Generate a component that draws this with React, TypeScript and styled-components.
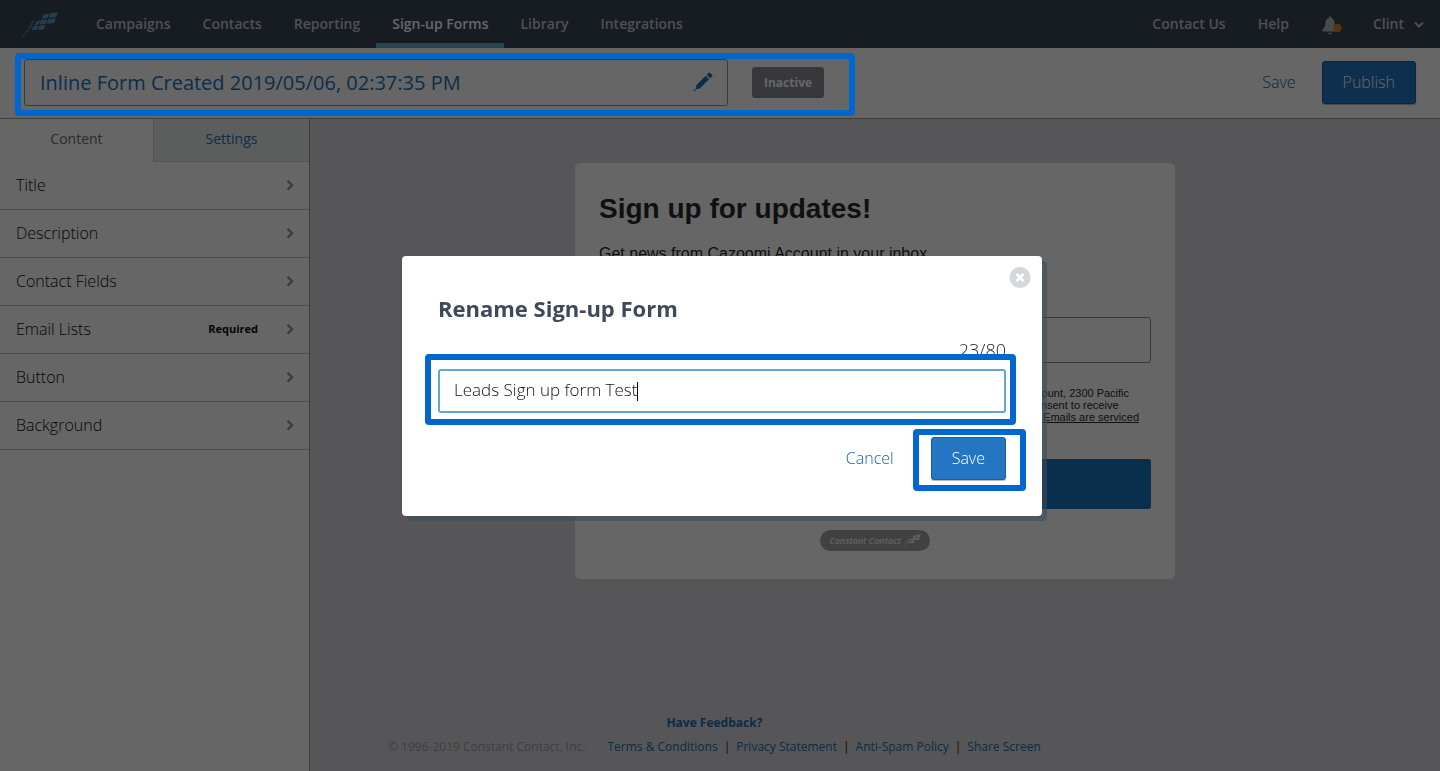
import React, { useState } from "react";
import styled, { createGlobalStyle } from "styled-components";

const SANS = `"Open Sans", "Noto Sans", sans-serif`;
const ARIAL = `"Liberation Sans", Arial, sans-serif`;
const LIGHT = 300;

const Global = createGlobalStyle`
  *, *::before, *::after { box-sizing: border-box; }
  html, body, #root { height: 100%; }
  body { margin: 0; font-family: ${SANS}; background: #d6d8dc; color: #1e2229; }
  button, input { font: inherit; }
  a { text-decoration: none; }
`;

const Page = styled.div`
  display: flex;
  flex-direction: column;
  min-height: 100%;
`;

/* ---------- top navigation ---------- */
const TopBar = styled.header`
  display: flex;
  align-items: stretch;
  justify-content: space-between;
  height: 48px;
  background: #3a4657;
`;

const NavGroup = styled.nav`
  display: flex;
  align-items: stretch;
`;

const LogoLink = styled.a`
  display: flex;
  align-items: center;
  width: 80px;
  padding-left: 22px;
  color: #5a9ebc;
`;

const NavLink = styled.a<{ $active?: boolean }>`
  display: flex;
  align-items: center;
  gap: 10px;
  padding: 5px 16px 0;
  border-bottom: 5px solid ${(p) => (p.$active ? "#62aac8" : "transparent")};
  color: ${(p) => (p.$active ? "#ffffff" : "#c4c8cc")};
  font-size: 14px;
  font-weight: 600;
  line-height: 18px;
`;

const BellButton = styled.button`
  position: relative;
  display: flex;
  align-items: center;
  margin: 0 15px 0 17px;
  padding: 2px 0 0;
  border: 0;
  background: none;
  color: #b4b8bc;
`;

/* ---------- form title toolbar ---------- */
const Toolbar = styled.div`
  display: flex;
  align-items: center;
  justify-content: space-between;
  height: 71px;
  padding: 0 24px 1px;
  border-bottom: 1px solid #9aa0a8;
  background: #ffffff;
`;

const TitleGroup = styled.div`
  position: relative;
  display: flex;
  align-items: center;
  gap: 24px;
`;

const TitleButton = styled.button`
  display: flex;
  align-items: center;
  justify-content: space-between;
  width: 704px;
  height: 47px;
  padding: 0 14px 1px 15px;
  border: 1px solid #8d929a;
  border-radius: 3px;
  background: #ffffff;
  color: #1a73b8;
  font-size: 20px;
  font-weight: 400;
  text-align: left;
`;

const StatusBadge = styled.span`
  padding: 7px 12px 6px;
  border-radius: 3px;
  background: #888d96;
  color: #ffffff;
  font-size: 12px;
  font-weight: 700;
  line-height: 18px;
`;

const Actions = styled.div`
  display: flex;
  align-items: center;
  justify-content: flex-end;
  gap: 26px;
`;

const TextButton = styled.button`
  padding: 0 0 2px;
  border: 0;
  background: none;
  color: #0f66b4;
  font-size: 16px;
  font-weight: ${LIGHT};
  line-height: 20px;
`;

const PrimaryButton = styled.button`
  height: 43px;
  padding: 0 20px 2px;
  border: 1px solid #1a5fa0;
  border-radius: 3px;
  background: #2476c2;
  box-shadow: 0 1px 1px rgba(0, 0, 0, 0.3);
  color: #ffffff;
  font-size: 16px;
  font-weight: ${LIGHT};
  line-height: 20px;
`;

/* ---------- sidebar ---------- */
const Body = styled.div`
  display: flex;
  flex: 1;
`;

const Sidebar = styled.aside`
  flex: none;
  width: 310px;
  border-right: 1px solid #9a9ea6;
  background: #ffffff;
`;

const Tabs = styled.div`
  display: grid;
  grid-template-columns: 153px 1fr;
  height: 43px;
`;

const Tab = styled.button<{ $active?: boolean }>`
  padding: 0 0 3px;
  border: 0;
  border-left: ${(p) => (p.$active ? "0" : "1px solid #cdd1d4")};
  border-bottom: 1px solid ${(p) => (p.$active ? "transparent" : "#cdd1d4")};
  background: ${(p) => (p.$active ? "#ffffff" : "#e6eaea")};
  color: ${(p) => (p.$active ? "#6c7077" : "#1a73b8")};
  font-size: 14px;
`;

const Sections = styled.ul`
  margin: 0;
  padding: 0;
  list-style: none;
`;

const SectionButton = styled.button`
  display: flex;
  align-items: center;
  width: 100%;
  height: 48px;
  padding: 0 15px 2px 16px;
  border: 0;
  border-bottom: 1px solid #c4c7ca;
  background: none;
  color: #0a0d12;
  font-size: 16px;
  font-weight: ${LIGHT};
  text-align: left;
`;

const SectionName = styled.span`
  flex: 1;
`;

const Required = styled.span`
  margin-right: 28px;
  font-size: 11px;
  font-weight: 700;
`;

/* ---------- preview ---------- */
const Main = styled.main`
  display: flex;
  flex: 1;
  flex-direction: column;
  align-items: center;
  padding: 44px 0 16px;
  background: #d6d8dc;
`;

const Card = styled.form`
  display: flex;
  flex-direction: column;
  width: 600px;
  max-width: 100%;
  padding: 29px 24px 28px;
  border-radius: 5px;
  background: #ffffff;
  color: #2a2a2a;
  font-family: ${ARIAL};
`;

const CardTitle = styled.h1`
  margin: 0 0 18px;
  font-size: 28px;
  font-weight: 700;
  line-height: 34px;
`;

const CardText = styled.p`
  margin: 0;
  font-size: 16px;
  line-height: 20px;
`;

const EmailInput = styled.input`
  height: 46px;
  margin: 53px 0 24px;
  border: 1px solid #8a8a8a;
  border-radius: 3px;
  background: #ffffff;
`;

const FinePrint = styled.p`
  margin: 0 0 24px;
  font-size: 11px;
  line-height: 12px;

  a { color: inherit; text-decoration: underline; }
`;

const SubmitButton = styled.button`
  height: 50px;
  margin-bottom: 21px;
  border: 0;
  border-radius: 3px;
  background: #1b77bd;
  color: #ffffff;
  font-size: 16px;
`;

const PoweredBy = styled.a`
  display: flex;
  align-items: center;
  align-self: center;
  gap: 2px;
  height: 21px;
  padding: 0 9px;
  border-radius: 11px;
  background: #a3a3a3;
  color: #f2f2f2;
  font-family: ${SANS};
  font-size: 9px;
  font-style: italic;
  font-weight: 600;
`;

const Footer = styled.footer`
  display: flex;
  flex-direction: column;
  align-items: center;
  align-self: flex-start;
  gap: 8px;
  margin: auto 0 0 78px;
  font-size: 12px;
  line-height: 16px;
`;

const FooterRow = styled.div`
  display: flex;
  gap: 6px;
`;

const Copyright = styled.span`
  margin-right: 16px;
  color: #9a9da3;
`;

const FooterLink = styled.a<{ $strong?: boolean }>`
  color: #1a6fb0;
  font-weight: ${(p) => (p.$strong ? 700 : 400)};
`;

/* ---------- rename dialog ---------- */
const Overlay = styled.div`
  position: fixed;
  inset: 0;
  z-index: 10;
  display: flex;
  align-items: flex-start;
  justify-content: center;
  padding: 256px 0 0 4px;
  background: rgba(0, 0, 0, 0.6);
`;

const Dialog = styled.section`
  position: relative;
  width: 640px;
  padding: 36px;
  border-radius: 4px;
  background: #ffffff;
  box-shadow: 5px 5px 0 rgba(60, 76, 92, 0.6);
`;

const CloseButton = styled.button`
  position: absolute;
  top: 11px;
  right: 11px;
  display: flex;
  padding: 0;
  border: 0;
  background: none;
`;

const DialogTitle = styled.h2`
  margin: 0 0 20px;
  color: #3c4a5a;
  font-size: 22px;
  font-weight: 700;
  line-height: 32px;
`;

const CounterRow = styled.div`
  display: flex;
  justify-content: flex-end;
  margin-bottom: 13px;
  color: #20262f;
  font-size: 18px;
  font-weight: ${LIGHT};
  line-height: 12px;
`;

const Field = styled.div`
  position: relative;
  margin-bottom: 24px;
`;

const InputBox = styled.label`
  display: flex;
  align-items: center;
  height: 44px;
  padding: 0 14px;
  border: 2px solid #5fa8cf;
  border-radius: 3px;
`;

const NameInput = styled.input`
  field-sizing: content;
  padding: 0 0 3px;
  border: 0;
  outline: 0;
  background: none;
  color: #10151c;
  font-size: 17px;
  font-weight: ${LIGHT};
  line-height: 22px;
`;

const Caret = styled.span`
  width: 1px;
  height: 19px;
  background: #000000;
`;

const SaveWrap = styled.div`
  position: relative;
  display: flex;
  margin-left: 11px;
`;

const Highlight = styled.span<{ $inset: string }>`
  position: absolute;
  inset: ${(p) => p.$inset};
  z-index: 20;
  border: 6px solid #0167cf;
  border-radius: 4px;
  pointer-events: none;
`;

/* ---------- icons ---------- */
const FlagLogo = ({ width, height }: { width: number; height: number }) => (
  <svg width={width} height={height} viewBox="0 0 36 25" fill="currentColor" aria-hidden="true">
    <path d="M21.500 2.600 27.200 1.400 25.600 6 19.400 6.800zM28.300 1.200 35.800 0.200 34.200 5 26.700 5.900zM19 7.900 25.200 7.200 23.600 12 17 12.400zM26.300 7 33.800 6.200 32.200 11 24.700 11.800z" />
    <path d="M14.800 9.600 18.200 8 16.400 12.400 12.200 13.200zM11.600 14.300 16.200 13.500 14.800 17.800 10 18.200zM17.300 13.500 23.400 13 21.800 17.600 15.800 17.800z" />
    <path d="M9.500 10.300 12.700 7.500 11.500 10 8.600 13zM7.700 14.200 10.900 11.500 9.500 14.600 5.900 17.200zM5.300 18.200 8.700 16 5.500 19.800 3.300 21.700zM2.800 21.400 4.600 20.700 0.800 25 0 24.700z" />
  </svg>
);

const Pencil = () => (
  <svg width="20" height="20" viewBox="0 0 20 20" fill="currentColor" aria-hidden="true">
    <path d="M13.700 2.700 15.700 0.700Q16.300 0.200 17 0.800L19.200 3Q19.800 3.600 19.200 4.200L17.200 6.200z" />
    <path d="M12.800 3.700 16.200 7.200 6.700 16.600 2.500 17.500 3.400 13z" />
    <path d="M1.200 17.100 2.800 18.700 0.600 19.400z" />
  </svg>
);

const Bell = () => (
  <svg width="20" height="19" viewBox="0 0 20 19" aria-hidden="true">
    <path
      fill="currentColor"
      d="M8 0.600a1.200 1.200 0 0 1 1.200 1.400C11.400 2.600 12.600 4.400 12.600 6.800c0 3.400 0.600 5.400 2.600 6.400v2.300H0.500v-2.300C2.600 12.200 3.400 10.200 3.400 6.800c0-2.400 1.200-4.200 3.400-4.800A1.200 1.200 0 0 1 8 0.600zM6 16.700h4a2 1.600 0 0 1-4 0z"
    />
    <circle cx="15.500" cy="12" r="4.200" fill="#d9822b" />
  </svg>
);

const ChevronDown = () => (
  <svg width="10" height="8" viewBox="0 0 10 8" fill="none" stroke="currentColor" strokeWidth="2" aria-hidden="true">
    <path d="M1 2.500 5 6.500 9 2.500" />
  </svg>
);

const ChevronRight = () => (
  <svg width="8" height="12" viewBox="0 0 8 12" fill="none" stroke="#8e9398" strokeWidth="2.200" aria-hidden="true">
    <path d="M1.500 1.700 6 6.200 1.500 10.700" />
  </svg>
);

const CloseIcon = () => (
  <svg width="22" height="22" viewBox="0 0 22 22" aria-hidden="true">
    <circle cx="11" cy="10.500" r="10.500" fill="#d5d8db" />
    <path d="M7.500 7 14.500 14M14.500 7 7.500 14" stroke="#fff" strokeWidth="2.600" />
  </svg>
);

const navItems = ["Campaigns", "Contacts", "Reporting", "Sign-up Forms", "Library", "Integrations"];
const sections = ["Title", "Description", "Contact Fields", "Email Lists", "Button", "Background"];
const footerLinks = ["Terms & Conditions", "Privacy Statement", "Anti-Spam Policy", "Share Screen"];

export default function App() {
  const [name, setName] = useState("Leads Sign up form Test");

  return (
    <>
      <Global />
      <Page>
        <TopBar>
          <NavGroup aria-label="Main">
            <LogoLink href="#" aria-label="Home">
              <FlagLogo width={36} height={25} />
            </LogoLink>
            {navItems.map((item) => (
              <NavLink key={item} href="#" $active={item === "Sign-up Forms"}>
                {item}
              </NavLink>
            ))}
          </NavGroup>
          <NavGroup aria-label="Account">
            <NavLink href="#">Contact Us</NavLink>
            <NavLink href="#">Help</NavLink>
            <BellButton type="button" aria-label="Notifications">
              <Bell />
            </BellButton>
            <NavLink href="#">
              Clint
              <ChevronDown />
            </NavLink>
          </NavGroup>
        </TopBar>

        <Toolbar>
          <TitleGroup>
            <TitleButton type="button">
              Inline Form Created 2019/05/06, 02:37:35 PM
              <Pencil />
            </TitleButton>
            <StatusBadge>Inactive</StatusBadge>
            <Highlight $inset="-6px -31px -10px -9px" />
          </TitleGroup>
          <Actions>
            <TextButton type="button">Save</TextButton>
            <PrimaryButton type="button">Publish</PrimaryButton>
          </Actions>
        </Toolbar>

        <Body>
          <Sidebar>
            <Tabs>
              <Tab type="button" $active>Content</Tab>
              <Tab type="button">Settings</Tab>
            </Tabs>
            <Sections>
              {sections.map((section) => (
                <li key={section}>
                  <SectionButton type="button">
                    <SectionName>{section}</SectionName>
                    {section === "Email Lists" && <Required>Required</Required>}
                    <ChevronRight />
                  </SectionButton>
                </li>
              ))}
            </Sections>
          </Sidebar>

          <Main>
            <Card>
              <CardTitle>Sign up for updates!</CardTitle>
              <CardText>Get news from Cazoomi Account in your inbox.</CardText>
              <EmailInput type="email" aria-label="Email" />
              <FinePrint>
                By submitting this form, you are consenting to receive marketing emails from: Cazoomi Account, 2300 Pacific
                Coast Highway, Suite 305, Hermosa Beach, California, 90254, US. You can revoke your consent to receive
                emails at any time by using the SafeUnsubscribe® link, found at the bottom of every email.{" "}
                <a href="#">Emails are serviced by Constant Contact.</a>
              </FinePrint>
              <SubmitButton type="button">Sign up!</SubmitButton>
              <PoweredBy href="#">
                Constant Contact
                <FlagLogo width={18} height={13} />
              </PoweredBy>
            </Card>

            <Footer>
              <FooterLink href="#" $strong>Have Feedback?</FooterLink>
              <FooterRow>
                <Copyright>© 1996-2019 Constant Contact, Inc.</Copyright>
                {footerLinks.map((link, i) => (
                  <React.Fragment key={link}>
                    {i > 0 && <span>|</span>}
                    <FooterLink href="#">{link}</FooterLink>
                  </React.Fragment>
                ))}
              </FooterRow>
            </Footer>
          </Main>
        </Body>
      </Page>

      <Overlay>
        <Dialog role="dialog" aria-labelledby="rename-title">
          <CloseButton type="button" aria-label="Close">
            <CloseIcon />
          </CloseButton>
          <DialogTitle id="rename-title">Rename Sign-up Form</DialogTitle>
          <CounterRow>{name.length}/80</CounterRow>
          <Field>
            <InputBox>
              <NameInput aria-label="Form name" value={name} onChange={(e) => setName(e.target.value)} />
              <Caret />
            </InputBox>
            <Highlight $inset="-15px -10px -12px -13px" />
          </Field>
          <Actions>
            <TextButton type="button">Cancel</TextButton>
            <SaveWrap>
              <PrimaryButton type="button">Save</PrimaryButton>
              <Highlight $inset="-8px -20px -11px -18px" />
            </SaveWrap>
          </Actions>
        </Dialog>
      </Overlay>
    </>
  );
}
